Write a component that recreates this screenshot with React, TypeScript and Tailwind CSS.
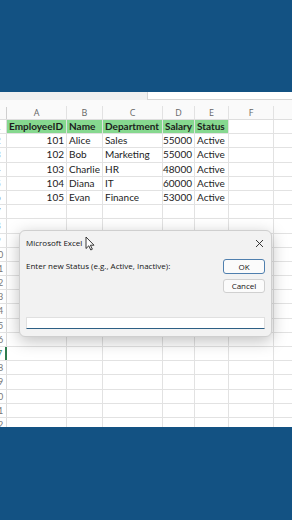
import React from 'react';

const cols = [
  { key: 'A', w: 'w-[60px]' },
  { key: 'B', w: 'w-[36px]' },
  { key: 'C', w: 'w-[60px]' },
  { key: 'D', w: 'w-[32px]' },
  { key: 'E', w: 'w-[34px]' },
  { key: 'F', w: 'w-[45px]' },
  { key: 'G', w: 'w-[64px]' },
];

type Cell = { text: string; right?: boolean; bold?: boolean };

const header: Cell[] = [
  { text: 'EmployeeID', bold: true },
  { text: 'Name', bold: true },
  { text: 'Department', bold: true },
  { text: 'Salary', bold: true },
  { text: 'Status', bold: true },
];

const employees = [
  ['101', 'Alice', 'Sales', '55000', 'Active'],
  ['102', 'Bob', 'Marketing', '55000', 'Active'],
  ['103', 'Charlie', 'HR', '48000', 'Active'],
  ['104', 'Diana', 'IT', '60000', 'Active'],
  ['105', 'Evan', 'Finance', '53000', 'Active'],
];

// row numbers are centred in a wider header that is scrolled mostly out of view
function RowHead({ n, active }: { n: number; active?: boolean }) {
  return (
    <div className={`w-[7px] shrink-0 h-full overflow-hidden flex justify-end border-r ${active ? 'border-[#2e7d4f] border-r-2' : 'border-[#dcdcdc]'}`}>
      <div className={`w-[16px] shrink-0 text-center text-[9px] leading-[14px] ${active ? 'text-[#2e7d4f]' : 'text-[#777]'}`}>{n}</div>
    </div>
  );
}

function SheetRow({ n, cells, green, active }: { n: number; cells?: Cell[]; green?: boolean; active?: boolean }) {
  return (
    <div className="flex h-[14.2px] shrink-0 border-b border-[#e2e2e2]">
      <RowHead n={n} active={active} />
      {cols.map((c, i) => {
        const cell = cells?.[i];
        return (
          <div
            key={c.key}
            className={`${c.w} shrink-0 h-full border-r border-[#e2e2e2] px-[2px] flex items-center overflow-visible whitespace-nowrap text-[10px] text-[#1c1c1c] ${cell?.right ? 'justify-end' : 'justify-start'} ${green && i < 5 ? 'bg-[#86d88f] border-[#86d88f]' : ''} ${cell?.bold ? 'font-bold' : ''}`}
          >
            {cell?.text}
          </div>
        );
      })}
    </div>
  );
}

function Pointer() {
  return (
    <svg width="10" height="15" viewBox="0 0 10 15">
      <path d="M1 1 L1 12.5 L3.8 9.8 L5.8 14 L7.4 13.2 L5.4 9.2 L9 9.2 Z" fill="#fff" stroke="#222" strokeWidth="0.9" strokeLinejoin="round" />
    </svg>
  );
}

export default function App() {
  const rows: React.ReactNode[] = [];
  rows.push(<SheetRow key={1} n={1} cells={header} green />);
  employees.forEach((e, i) => {
    rows.push(
      <SheetRow
        key={i + 2}
        n={i + 2}
        cells={[
          { text: e[0], right: true },
          { text: e[1] },
          { text: e[2] },
          { text: e[3], right: true },
          { text: e[4] },
        ]}
      />
    );
  });
  for (let n = 7; n <= 23; n++) rows.push(<SheetRow key={n} n={n} active={n === 17} />);

  return (
    <div className="relative w-[292px] h-[520px] overflow-hidden bg-[#13527f] flex flex-col font-['Lato','Liberation_Sans',sans-serif]">
      <div className="h-[92px] shrink-0 bg-[#135283]" />

      <div className="h-[335px] shrink-0 bg-white flex flex-col overflow-hidden">
        {/* formula bar strip */}
        <div className="h-[8px] shrink-0 flex bg-[#f0f0f0]">
          <div className="w-[147px] shrink-0" />
          <div className="flex-1 bg-white border-l border-b border-[#d6d6d6]" />
        </div>

        {/* column letters */}
        <div className="h-[20px] shrink-0 flex bg-[#fafafa] border-b border-[#dedede]">
          <div className="w-[7px] shrink-0 flex flex-col">
            <div className="h-[7px]" />
            <div className="flex-1 border-r border-[#cfcfcf]" />
          </div>
          {cols.map((c) => (
            <div key={c.key} className={`${c.w} shrink-0 flex flex-col`}>
              <div className="h-[7px]" />
              <div className="flex-1 border-r border-[#e2e2e2] flex items-center justify-center text-[9px] text-[#666] font-['Open_Sans',sans-serif]">
                {c.key}
              </div>
            </div>
          ))}
        </div>

        <div className="flex flex-col">{rows}</div>
      </div>

      <div className="flex-1 bg-[#135283]" />

      {/* input dialog */}
      <div className="absolute left-[19px] top-[230px] w-[253px] h-[107px] rounded-[6px] bg-[#f2f2f2] border border-[#cfcfcf] shadow-[0_4px_16px_rgba(0,0,0,0.25)] flex flex-col px-[6px] pb-[7px] font-['Open_Sans','Noto_Sans',sans-serif] text-[#141414]">
        <div className="h-[14px] mt-[5px] flex items-center justify-between">
          <div className="flex items-center gap-[3px]">
            <span className="text-[8px] leading-none">Microsoft Excel</span>
            <Pointer />
          </div>
          <svg width="9" height="9" viewBox="0 0 9 9" className="mr-[1px]">
            <path d="M1 1 L8 8 M8 1 L1 8" stroke="#222" strokeWidth="0.9" />
          </svg>
        </div>

        <div className="flex justify-between mt-[9px]">
          <div className="text-[8px] leading-[12px] mt-[1px]">Enter new Status (e.g., Active, Inactive):</div>
          <div className="flex flex-col gap-[5px] w-[42px]">
            <div className="h-[15px] rounded-[3px] bg-[#fbfbfb] border border-[#4f7fae] flex items-center justify-center text-[8px]">OK</div>
            <div className="h-[14px] rounded-[3px] bg-[#fbfbfb] border border-[#d0d0d0] flex items-center justify-center text-[8px]">Cancel</div>
          </div>
        </div>

        <div className="mt-auto h-[12px] bg-white border border-[#e0e0e0] border-b-[1.5px] border-b-[#2d5f85]" />
      </div>
    </div>
  );
}
